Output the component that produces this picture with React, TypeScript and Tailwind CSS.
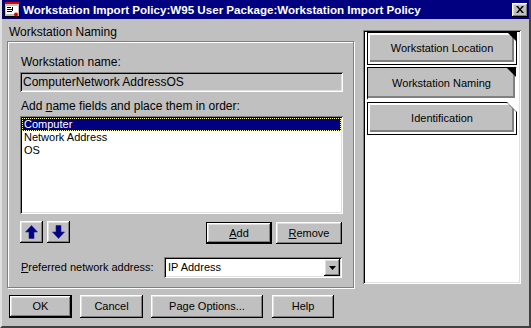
import React from "react";

// win95 bevels
const raised =
  "shadow-[inset_-1px_-1px_#000,inset_1px_1px_#fff,inset_-2px_-2px_#808080,inset_2px_2px_#dfdfdf]";
const sunken =
  "shadow-[inset_1px_1px_#808080,inset_-1px_-1px_#fff,inset_2px_2px_#000,inset_-2px_-2px_#dfdfdf]";

function Button({
  children,
  className = "",
  isDefault = false,
}: {
  children: React.ReactNode;
  className?: string;
  isDefault?: boolean;
}) {
  if (isDefault) {
    return (
      <div className={`border border-black ${className}`}>
        <div className={`w-full h-full flex items-center justify-center bg-[#c0c0c0] ${raised}`}>
          {children}
        </div>
      </div>
    );
  }
  return (
    <div className={`flex items-center justify-center bg-[#c0c0c0] ${raised} ${className}`}>
      {children}
    </div>
  );
}

function Arrow({ down = false }: { down?: boolean }) {
  return (
    <svg width="13" height="14" viewBox="0 0 13 14" className={down ? "rotate-180" : ""}>
      <polygon points="6.5,0.5 12.5,7 9,7 9,13.5 4,13.5 4,7 0.5,7" fill="#000080" stroke="#2020a0" strokeWidth="0.6" />
    </svg>
  );
}

function DogEar({ folded }: { folded: boolean }) {
  return (
    <svg width="10" height="10" viewBox="0 0 10 10" className="absolute top-[-1px] right-[-1px]">
      {folded ? (
        <polygon points="0,0 10,0 10,10" fill="#000" />
      ) : (
        <>
          <polygon points="0,0 10,0 10,10" fill="#fff" />
          <line x1="0" y1="0.5" x2="9.5" y2="10" stroke="#808080" strokeWidth="1" />
        </>
      )}
    </svg>
  );
}

function Tab({ label, selected = false, folded = true }: { label: string; selected?: boolean; folded?: boolean }) {
  if (selected) {
    return (
      <div className="relative h-[33px] border-t border-l border-black border-r-2 border-b-2 border-r-white border-b-white">
        <div className="h-full bg-[#c0c0c0] shadow-[inset_-2px_-2px_#808080] flex items-center justify-center">
          {label}
        </div>
        <DogEar folded={folded} />
      </div>
    );
  }
  return (
    <div className="relative h-[33px] border border-black bg-white p-[2px]">
      <div className="h-full bg-[#c0c0c0] shadow-[inset_-2px_-2px_#808080] flex items-center justify-center">
        {label}
      </div>
      <DogEar folded={folded} />
    </div>
  );
}

export default function App() {
  return (
    <div className="w-[531px] h-[328px] bg-[#c0c0c0] flex flex-col overflow-hidden font-['Liberation_Sans',Arial,sans-serif] text-[11px] leading-[13px] text-black border-l-2 border-l-[#dfdfdf] border-r-2 border-r-[#404040] border-b-2 border-b-[#404040]">
      {/* title bar */}
      <div className="h-[19px] bg-[#000080] flex items-center pl-[2px] shrink-0">
        <svg width="16" height="16" viewBox="0 0 16 16" className="shrink-0">
          <rect x="0.5" y="1.5" width="15" height="13" fill="#c0c0c0" stroke="#000" />
          <rect x="1" y="0" width="14" height="2" fill="#e00000" />
          <rect x="2" y="4" width="12" height="8" fill="#fff" />
          <rect x="3" y="5" width="4" height="1" fill="#000" />
          <rect x="3" y="7" width="6" height="1" fill="#000" />
          <rect x="3" y="9" width="5" height="1" fill="#000" />
          <rect x="8" y="5" width="1" height="4" fill="#000" />
          <circle cx="12" cy="12.5" r="2" fill="#e00000" />
        </svg>
        <span className="ml-[3px] text-white font-bold text-[11.6px] whitespace-nowrap">
          Workstation Import Policy:W95 User Package:Workstation Import Policy
        </span>
        <div className="flex-1" />
        <div className={`w-[16px] h-[14px] mr-[1px] flex items-center justify-center bg-[#c0c0c0] ${raised}`}>
          <svg width="8" height="7" viewBox="0 0 8 7">
            <path d="M0 0h2l2 2.5L6 0h2L5 3.5 8 7H6L4 4.5 2 7H0l3-3.5z" fill="#000" />
          </svg>
        </div>
      </div>

      {/* body */}
      <div className="flex-1 flex flex-col pl-[5px]">
        <div className="flex items-start">
          {/* left column */}
          <div className="w-[347px] flex flex-col">
            <div className="mt-[6px] h-[16px] pl-[2px] text-[12px] leading-[14px]">Workstation Naming</div>
            <div className="h-[247px] border border-[#808080] shadow-[inset_1px_1px_#fff,1px_1px_#fff] flex flex-col pl-[12px] pr-[10px] pt-[14px]">
              <div className="pl-[1px] text-[12px]">Workstation name:</div>
              <div className={`mt-[3px] h-[20px] w-[323px] bg-[#c0c0c0] ${sunken} flex items-center pl-[3px] whitespace-nowrap text-[12px]`}>
                ComputerNetwork AddressOS
              </div>

              <div className="mt-[8px] pl-[1px] text-[12px]">
                Add <span className="underline">n</span>ame fields and place them in order:
              </div>
              <div className={`mt-[3px] h-[98px] w-[323px] bg-white ${sunken} p-[2px] flex flex-col`}>
                <div className="h-[13px] bg-[#000080] text-white border border-dotted border-[#ffffa0] pl-[1px] leading-[11px]">
                  Computer
                </div>
                <div className="h-[13px] pl-[2px]">Network Address</div>
                <div className="h-[13px] pl-[2px]">OS</div>
              </div>

              <div className="mt-[7px] flex items-start w-[323px]">
                <Button className="w-[23px] h-[22px]">
                  <Arrow />
                </Button>
                <Button className="ml-[4px] w-[23px] h-[22px]">
                  <Arrow down />
                </Button>
                <div className="flex-1" />
                <Button isDefault className="mt-[1px] w-[66px] h-[22px]">
                  <span>
                    <span className="underline">A</span>dd
                  </span>
                </Button>
                <Button className="ml-[4px] mt-[1px] mr-[1px] w-[66px] h-[22px]">
                  <span>
                    <span className="underline">R</span>emove
                  </span>
                </Button>
              </div>

              <div className="mt-[13px] flex items-center w-[323px]">
                <div className="pl-[1px] flex-1">
                  <span className="underline">P</span>referred network address:
                </div>
                <div className={`mr-[1px] w-[178px] h-[21px] bg-white ${sunken} flex items-center pl-[4px] pr-[2px]`}>
                  <span className="flex-1">IP Address</span>
                  <div className={`w-[16px] h-[17px] flex items-center justify-center bg-[#c0c0c0] ${raised}`}>
                    <svg width="7" height="4" viewBox="0 0 7 4">
                      <polygon points="0,0 7,0 3.5,4" fill="#000" />
                    </svg>
                  </div>
                </div>
              </div>
            </div>
          </div>

          {/* right panel */}
          <div className={`ml-[9px] mt-[11px] w-[158px] h-[254px] bg-white ${sunken} px-[4px] pt-[2px] flex flex-col gap-[2px]`}>
            <Tab label="Workstation Location" />
            <Tab label="Workstation Naming" selected />
            <Tab label="Identification" folded={false} />
          </div>
        </div>

        {/* bottom buttons */}
        <div className="mt-[7px] pl-[2px] flex gap-[8px]">
          <Button isDefault className="w-[63px] h-[23px]">OK</Button>
          <Button className="w-[63px] h-[23px]">Cancel</Button>
          <Button className="w-[112px] h-[23px]">Page Options...</Button>
          <Button className="w-[62px] h-[23px] ml-[1px]">Help</Button>
        </div>
      </div>
    </div>
  );
}
